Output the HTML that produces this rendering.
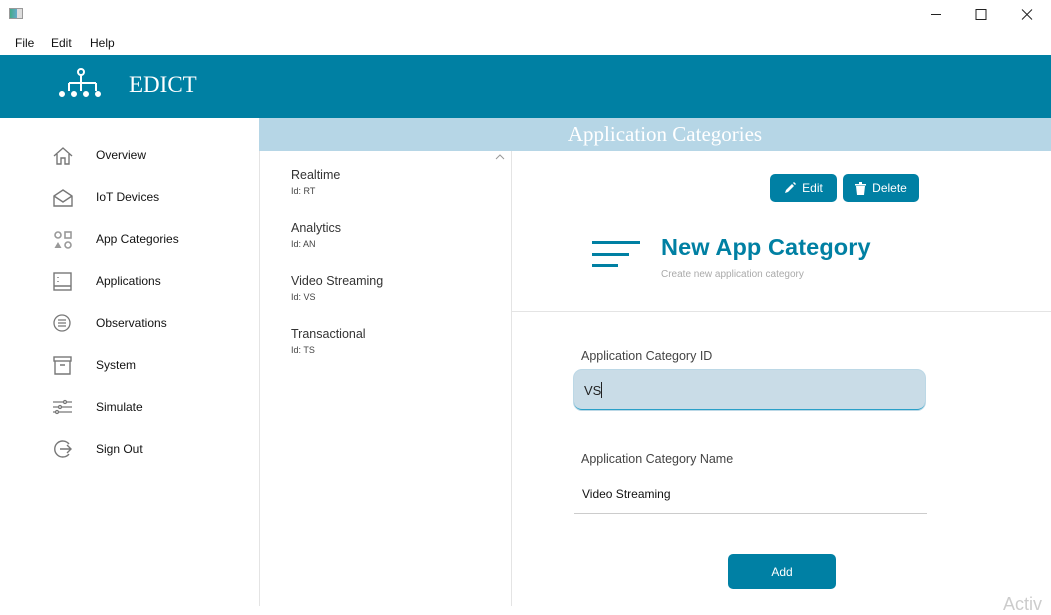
<!DOCTYPE html>
<html><head><meta charset="utf-8"><style>
*{margin:0;padding:0;box-sizing:border-box}
body{width:1051px;height:606px;overflow:hidden;background:#fff;font-family:"Liberation Sans",sans-serif;position:relative;color:#222}
.a{position:absolute}
.menu span{font-size:12px;color:#111;position:absolute;top:36px}
.nav{position:absolute;left:96px;font-size:12px;color:#111}
.ic{position:absolute;left:52px}
.li{position:absolute;left:291px}
.li b{font-weight:normal;font-size:12.5px;color:#333;display:block}
.li i{font-style:normal;font-size:9px;color:#444;display:block;margin-top:4px}
.btn{position:absolute;background:#0080a4;color:#fff;border-radius:5px;font-size:12px;display:flex;align-items:center;justify-content:center;gap:6px}
</style></head><body>
<div class="a" style="left:9px;top:8px;width:14px;height:11px;border:1px solid #999;background:linear-gradient(90deg,#4a8 0,#6ac 60%,#ddd 60%)"></div>
<svg class="a" style="left:925px;top:6px" width="120" height="16"><g stroke="#222" fill="none" stroke-width="1"><line x1="6" y1="8.5" x2="16" y2="8.5"/><rect x="976" y="3.5" width="10" height="10" transform="translate(-925,0)"/><path d="M97 3.5l10 10M107 3.5l-10 10"/></g></svg>
<div class="menu"><span style="left:15px">File</span><span style="left:51px">Edit</span><span style="left:90px">Help</span></div>
<div class="a" style="left:0;top:55px;width:1051px;height:63px;background:#0080a3"></div>
<svg class="a" style="left:58px;top:66px" width="46" height="34"><g fill="#fff" stroke="#fff"><circle cx="23" cy="6" r="3" fill="none" stroke-width="2"/><path d="M23 9v8M11 17h27M11 17v8M23 17v8M38 17v8" stroke-width="2" fill="none"/><circle cx="4" cy="28" r="2.5"/><circle cx="16" cy="28" r="2.5"/><circle cx="28" cy="28" r="2.5"/><circle cx="40" cy="28" r="2.5"/></g></svg>
<div class="a" style="left:129px;top:72px;font-family:'Liberation Serif',serif;font-size:23px;color:#fff">EDICT</div>
<div class="a" style="left:259px;top:118px;width:1px;height:488px;background:#e4e4e4"></div>
<svg class="ic" style="top:145px" width="22" height="22" fill="none" stroke="#777" stroke-width="1.4"><path d="M2 11L11 3l9 8M5 9v10h4v-6h4v6h4V9"/></svg>
<svg class="ic" style="top:187px" width="22" height="22" fill="none" stroke="#777" stroke-width="1.4"><path d="M2 9l9-6 9 6v10H2zM2 9l9 6 9-6"/></svg>
<svg class="ic" style="top:229px" width="22" height="22" fill="#999"><circle cx="6" cy="6" r="3" fill="none" stroke="#999" stroke-width="1.6"/><rect x="13" y="3" width="6" height="6" fill="none" stroke="#999" stroke-width="1.6"/><path d="M6 13l3.5 6h-7z"/><circle cx="16" cy="16" r="3" fill="none" stroke="#999" stroke-width="1.6"/></svg>
<svg class="ic" style="top:271px" width="22" height="22" fill="none" stroke="#777" stroke-width="1.4"><rect x="2" y="2" width="17" height="17"/><path d="M2 15h17M6 6v1M6 10v1"/></svg>
<svg class="ic" style="top:313px" width="22" height="22" fill="none" stroke="#777" stroke-width="1.3"><circle cx="10" cy="10" r="8"/><path d="M6 7h8M6 10h8M6 13h8"/></svg>
<svg class="ic" style="top:355px" width="22" height="22" fill="none" stroke="#777" stroke-width="1.4"><rect x="2" y="2" width="17" height="4"/><path d="M3 6v13h15V6M8 10h5"/></svg>
<svg class="ic" style="top:397px" width="22" height="22" fill="none" stroke="#777" stroke-width="1.3"><path d="M1 5h19M1 10h19M1 15h19"/><circle cx="13" cy="5" r="1.5" fill="#fff"/><circle cx="8" cy="10" r="1.5" fill="#fff"/><circle cx="5" cy="15" r="1.5" fill="#fff"/></svg>
<svg class="ic" style="top:439px" width="22" height="22" fill="none" stroke="#777" stroke-width="1.4"><path d="M17 5A8 8 0 1 0 17 15M8 10h11M15 6l4 4-4 4"/></svg>
<div class="nav" style="top:148px">Overview</div>
<div class="nav" style="top:190px">IoT Devices</div>
<div class="nav" style="top:232px">App Categories</div>
<div class="nav" style="top:274px">Applications</div>
<div class="nav" style="top:316px">Observations</div>
<div class="nav" style="top:358px">System</div>
<div class="nav" style="top:400px">Simulate</div>
<div class="nav" style="top:442px">Sign Out</div>
<div class="a" style="left:259px;top:118px;width:792px;height:33px;background:#b6d6e6"></div>
<div class="a" style="left:259px;top:122px;width:812px;text-align:center;font-family:'Liberation Serif',serif;font-size:21px;color:#fff">Application Categories</div>
<div class="a" style="left:511px;top:151px;width:1px;height:455px;background:#e4e4e4"></div>
<svg class="a" style="left:495px;top:154px" width="10" height="6" fill="none" stroke="#999"><path d="M1 5l4-4 4 4"/></svg>
<div class="li" style="top:168px"><b>Realtime</b><i>Id: RT</i></div>
<div class="li" style="top:221px"><b>Analytics</b><i>Id: AN</i></div>
<div class="li" style="top:274px"><b>Video Streaming</b><i>Id: VS</i></div>
<div class="li" style="top:327px"><b>Transactional</b><i>Id: TS</i></div>
<div class="btn" style="left:770px;top:174px;width:67px;height:28px"><svg width="12" height="12" fill="#fff"><path d="M1 11l1-3 6-6 2 2-6 6zM9 1l1-1 2 2-1 1z"/></svg>Edit</div>
<div class="btn" style="left:843px;top:174px;width:76px;height:28px"><svg width="11" height="13" fill="#fff"><path d="M0 2h11v1.5H0zM4 0h3v2H4zM1 4h9l-1 9H2z"/></svg>Delete</div>
<div class="a" style="left:592px;top:241px;width:48px;height:3px;background:#0080a3"></div>
<div class="a" style="left:592px;top:253px;width:37px;height:3px;background:#0080a3"></div>
<div class="a" style="left:592px;top:264px;width:26px;height:3px;background:#0080a3"></div>
<div class="a" style="left:661px;top:234px;font-size:23.5px;font-weight:bold;color:#0080a3;letter-spacing:0.1px">New App Category</div>
<div class="a" style="left:661px;top:269px;font-size:10px;color:#aaa">Create new application category</div>
<div class="a" style="left:512px;top:311px;width:539px;height:1px;background:#e4e4e4"></div>
<div class="a" style="left:581px;top:349px;font-size:12.5px;color:#444">Application Category ID</div>
<div class="a" style="left:574px;top:370px;width:351px;height:40px;background:#c9dce7;border-radius:8px;border-bottom:1.5px solid #2aa0c8;box-shadow:0 0 0 1px #bcd8e6"></div>
<div class="a" style="left:584px;top:382px;font-size:13px;color:#222">VS<span style="display:inline-block;width:1px;height:16px;background:#222;vertical-align:-3px"></span></div>
<div class="a" style="left:581px;top:452px;font-size:12.5px;color:#444">Application Category Name</div>
<div class="a" style="left:582px;top:487px;font-size:12px;color:#111">Video Streaming</div>
<div class="a" style="left:574px;top:513px;width:353px;height:1px;background:#ccc"></div>
<div class="btn" style="left:728px;top:554px;width:108px;height:35px">Add</div>
<div class="a" style="left:1003px;top:594px;font-size:18px;color:#ccc">Activ</div>
</body></html>
